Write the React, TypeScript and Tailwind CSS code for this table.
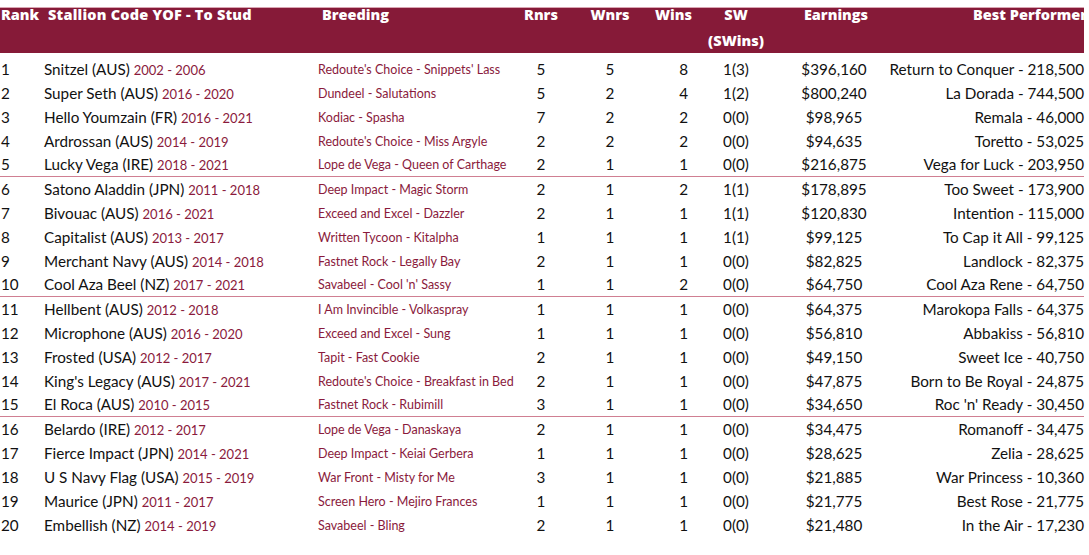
import React from "react";

type Row = [string, string, string, string, string, string, string, string, string, string];

const rows: Row[] = [
  ["1", "Snitzel (AUS)", "2002 - 2006", "Redoute's Choice - Snippets' Lass", "5", "5", "8", "1(3)", "$396,160", "Return to Conquer - 218,500"],
  ["2", "Super Seth (AUS)", "2016 - 2020", "Dundeel - Salutations", "5", "2", "4", "1(2)", "$800,240", "La Dorada - 744,500"],
  ["3", "Hello Youmzain (FR)", "2016 - 2021", "Kodiac - Spasha", "7", "2", "2", "0(0)", "$98,965", "Remala - 46,000"],
  ["4", "Ardrossan (AUS)", "2014 - 2019", "Redoute's Choice - Miss Argyle", "2", "2", "2", "0(0)", "$94,635", "Toretto - 53,025"],
  ["5", "Lucky Vega (IRE)", "2018 - 2021", "Lope de Vega - Queen of Carthage", "2", "1", "1", "0(0)", "$216,875", "Vega for Luck - 203,950"],
  ["6", "Satono Aladdin (JPN)", "2011 - 2018", "Deep Impact - Magic Storm", "2", "1", "2", "1(1)", "$178,895", "Too Sweet - 173,900"],
  ["7", "Bivouac (AUS)", "2016 - 2021", "Exceed and Excel - Dazzler", "2", "1", "1", "1(1)", "$120,830", "Intention - 115,000"],
  ["8", "Capitalist (AUS)", "2013 - 2017", "Written Tycoon - Kitalpha", "1", "1", "1", "1(1)", "$99,125", "To Cap it All - 99,125"],
  ["9", "Merchant Navy (AUS)", "2014 - 2018", "Fastnet Rock - Legally Bay", "2", "1", "1", "0(0)", "$82,825", "Landlock - 82,375"],
  ["10", "Cool Aza Beel (NZ)", "2017 - 2021", "Savabeel - Cool 'n' Sassy", "1", "1", "2", "0(0)", "$64,750", "Cool Aza Rene - 64,750"],
  ["11", "Hellbent (AUS)", "2012 - 2018", "I Am Invincible - Volkaspray", "1", "1", "1", "0(0)", "$64,375", "Marokopa Falls - 64,375"],
  ["12", "Microphone (AUS)", "2016 - 2020", "Exceed and Excel - Sung", "1", "1", "1", "0(0)", "$56,810", "Abbakiss - 56,810"],
  ["13", "Frosted (USA)", "2012 - 2017", "Tapit - Fast Cookie", "2", "1", "1", "0(0)", "$49,150", "Sweet Ice - 40,750"],
  ["14", "King's Legacy (AUS)", "2017 - 2021", "Redoute's Choice - Breakfast in Bed", "2", "1", "1", "0(0)", "$47,875", "Born to Be Royal - 24,875"],
  ["15", "El Roca (AUS)", "2010 - 2015", "Fastnet Rock - Rubimill", "3", "1", "1", "0(0)", "$34,650", "Roc 'n' Ready - 30,450"],
  ["16", "Belardo (IRE)", "2012 - 2017", "Lope de Vega - Danaskaya", "2", "1", "1", "0(0)", "$34,475", "Romanoff - 34,475"],
  ["17", "Fierce Impact (JPN)", "2014 - 2021", "Deep Impact - Keiai Gerbera", "1", "1", "1", "0(0)", "$28,625", "Zelia - 28,625"],
  ["18", "U S Navy Flag (USA)", "2015 - 2019", "War Front - Misty for Me", "3", "1", "1", "0(0)", "$21,885", "War Princess - 10,360"],
  ["19", "Maurice (JPN)", "2011 - 2017", "Screen Hero - Mejiro Frances", "1", "1", "1", "0(0)", "$21,775", "Best Rose - 21,775"],
  ["20", "Embellish (NZ)", "2014 - 2019", "Savabeel - Bling", "2", "1", "1", "0(0)", "$21,480", "In the Air - 17,230"],
];

const grid = "grid grid-cols-[44px_274px_192px_62px_76px_42px_92px_104px_198px] w-[1084px]";

export default function App() {
  return (
    <div className="w-[1089px] h-[555px] bg-white overflow-hidden pt-[7px]" style={{ fontFamily: "Lato, 'Open Sans', sans-serif" }}>
      <div
        className={`${grid} h-[46px] bg-[#861a38] border-t border-[#d9a5b2] text-white font-extrabold text-[14.5px] leading-[14px]`}
        style={{ fontFamily: "'Open Sans', Lato, sans-serif" }}
      >
        <div className="pl-[1px]">Rank</div>
        <div className="pl-[4px] whitespace-nowrap tracking-[0.2px]">Stallion Code YOF - To Stud</div>
        <div className="pl-[4px]">Breeding</div>
        <div className="text-center">Rnrs</div>
        <div className="text-center">Wnrs</div>
        <div className="text-right -mr-[2px]">Wins</div>
        <div className="text-center">
          <div>SW</div>
          <div className="mt-[12px]">(SWins)</div>
        </div>
        <div className="text-center pl-[4px]">Earnings</div>
        <div className="text-right -mr-[3px] whitespace-nowrap">Best Performer</div>
      </div>
      <div className="pt-[4px]">
        {rows.map((r, i) => (
          <div
            key={r[0]}
            className={`${grid} h-[24px] items-center text-[15.25px] text-[#111111] ${
              i === 4 || i === 9 || i === 14 ? "border-b border-[#d07f92]" : ""
            }`}
          >
            <div className="pl-[1px]">{r[0]}</div>
            <div className="whitespace-nowrap">
              {r[1]} <span className="text-[13px] text-[#8a1a3c]">{r[2]}</span>
            </div>
            <div className="text-[12.5px] text-[#8a1a3c] whitespace-nowrap pt-[2px]">{r[3]}</div>
            <div className="text-center">{r[4]}</div>
            <div className="text-center">{r[5]}</div>
            <div className="text-right pr-[2px]">{r[6]}</div>
            <div className="text-center">{r[7]}</div>
            <div className="text-center">{r[8]}</div>
            <div className="text-right whitespace-nowrap">{r[9]}</div>
          </div>
        ))}
      </div>
    </div>
  );
}
